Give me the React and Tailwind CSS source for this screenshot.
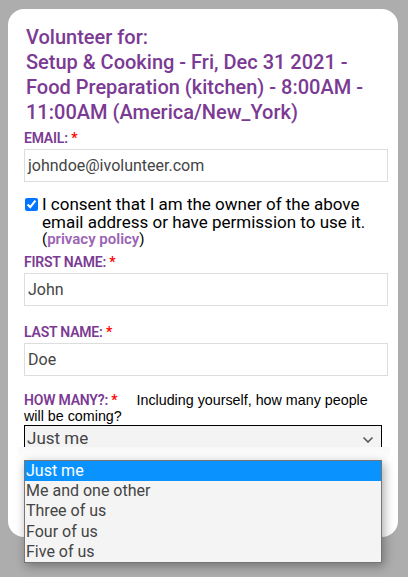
import { ChevronDown } from "lucide-react";

const purple = "text-[#7b3a93]";

const Label = ({ children }) => (
  <div className={`text-[14px] leading-4 font-semibold ${purple} tracking-[-0.2px]`}>
    {children}: <span className="text-[#ff0000]">*</span>
  </div>
);

const Field = ({ value }) => (
  <div className="mt-[3px] h-[33px] w-[364px] border border-[#dddddd] bg-white px-[3px] flex items-center text-[16px] text-[#444444]">
    {value}
  </div>
);

const options = ["Just me", "Me and one other", "Three of us", "Four of us", "Five of us"];

export default function App() {
  return (
    <div
      className="min-h-[577px] bg-[#adadad] pt-[9px] px-2 overflow-hidden"
      style={{ fontFamily: "Roboto, 'Liberation Sans', sans-serif" }}
    >
      <div className="relative w-[390px] h-[528px] bg-white rounded-2xl pt-4 pl-4">
        <h1 className={`pl-[2px] text-[20px] leading-[25px] font-medium ${purple}`}>
          Volunteer for:
          <br />
          Setup &amp; Cooking - Fri, Dec 31 2021 -
          <br />
          Food Preparation (kitchen) - 8:00AM -
          <br />
          11:00AM (America/New_York)
        </h1>

        <div className="mt-[5px]">
          <Label>EMAIL</Label>
          <Field value="johndoe@ivolunteer.com" />
        </div>

        <div className="mt-[14px] flex items-start gap-[4px]">
          <input
            type="checkbox"
            defaultChecked
            className="mt-[2px] ml-[1px] w-[13px] h-[13px] accent-[#0075ff] shrink-0"
          />
          <div className="text-[17px] leading-[17.5px] text-black pr-2">
            I consent that I am the owner of the above email address or have permission to use it.
            <div className="text-[15px] leading-[17px]">
              (<span className="font-semibold text-[#9b63b4]">privacy policy</span>)
            </div>
          </div>
        </div>

        <div className="mt-[6px]">
          <Label>FIRST NAME</Label>
          <Field value="John" />
        </div>

        <div className="mt-[18px]">
          <Label>LAST NAME</Label>
          <Field value="Doe" />
        </div>

        <div className="mt-[16px] relative">
          <div
            className="text-[14.3px] leading-[16px] text-black pr-[16px]"
            style={{ fontFamily: "'Liberation Sans', Arial, sans-serif" }}
          >
            <span
              className={`inline-block leading-4 text-[14px] font-semibold ${purple} tracking-[-0.2px]`}
              style={{ fontFamily: "Roboto, sans-serif" }}
            >
              HOW MANY?: <span className="text-[#ff0000]">*</span>
            </span>
            <span className="ml-[19px]">Including yourself, how many people will be coming?</span>
          </div>
          <div className="mt-[1px] w-[358px] h-[22px] border-t border-x border-black bg-[#f3f3f3] flex items-center justify-between pl-[2px] pr-[5px] text-[17px] text-[#444444] overflow-hidden">
            <span className="mt-[4px]">Just me</span>
            <ChevronDown className="w-4 h-4 text-[#555555] mt-[6px]" strokeWidth={2.5} />
          </div>

          <div className="absolute left-[-6px] top-[55px] w-[372px] h-[12px] bg-gradient-to-b from-[#f8f8f8] to-white" />
          <div className="absolute left-0 top-[68px] w-[358px] bg-[#f4f4f4] border border-[#767676] shadow-[2px_3px_10px_rgba(0,0,0,0.35)] text-[16px] leading-[20.2px] text-[#444444]">
            {options.map((o, i) => (
              <div
                key={o}
                className={i === 0 ? "bg-[#0a93ff] text-white px-[1px]" : "px-[1px]"}
              >
                {o}
              </div>
            ))}
          </div>
        </div>
      </div>
    </div>
  );
}
